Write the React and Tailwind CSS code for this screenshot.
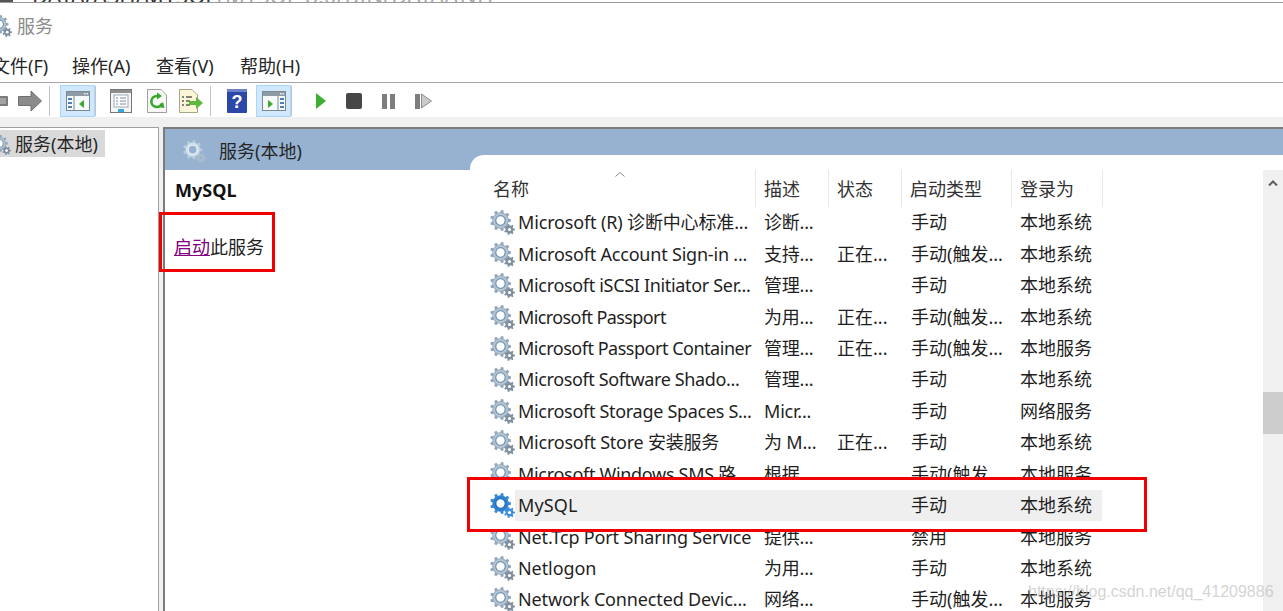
import React from "react";

const FONT = { fontFamily: '"Noto Sans", "Noto Sans CJK SC", sans-serif' };

function gearPoints(cx, cy, rOuter, rInner, teeth) {
  const pts = [];
  const step = (Math.PI * 2) / teeth;
  for (let i = 0; i < teeth; i++) {
    const a = i * step;
    const w = step * 0.22;
    pts.push([a - w * 1.3, rInner], [a - w * 0.8, rOuter], [a + w * 0.8, rOuter], [a + w * 1.3, rInner]);
  }
  return pts
    .map(([a, r]) => `${(cx + Math.cos(a) * r).toFixed(2)},${(cy + Math.sin(a) * r).toFixed(2)}`)
    .join(" ");
}

const BIG = gearPoints(10.5, 10.5, 10.5, 8.2, 9);
const SMALL = gearPoints(19.5, 19.5, 5.5, 4, 7);

function Gear({ palette = "grey", className = "" }) {
  const p = {
    grey: { a: "#8fa6bd", b: "#b9c4cf", c: "#7f8f9f", hole: "#ffffff", ring: "#6d95bd" },
    blue: { a: "#3d8bd6", b: "#2f7fd0", c: "#3f8fdc", hole: "#ffffff", ring: "#1f6fc0" },
    pale: { a: "#b7cde0", b: "#d2e0ec", c: "#a9bccd", hole: "#97b2d1", ring: "#e3eef6" },
  }[palette];
  return (
    <svg viewBox="0 0 25 25" className={className}>
      <polygon points={BIG} fill={p.a} />
      <circle cx="10.5" cy="10.5" r="7.4" fill={p.b} />
      <circle cx="10.5" cy="10.5" r="4.8" fill={p.hole} stroke={p.ring} strokeWidth="1.3" />
      <polygon points={SMALL} fill={p.c} />
      <circle cx="19.5" cy="19.5" r="1.6" fill={palette === "pale" ? "#97b2d1" : "#ffffff"} />
    </svg>
  );
}

function Sep() {
  return <div className="h-[30px] w-px bg-[#c4c4c4]" />;
}

function PaneIcon({ flip }) {
  return (
    <svg viewBox="0 0 24 20" className="h-[20px] w-[24px]">
      <rect x="0.5" y="0.5" width="23" height="19" fill="#f7f9fb" stroke="#7d8a94" />
      <rect x="1" y="1" width="22" height="4" fill="#8f9ba5" />
      <path d="M18 2h1.5v1.5H18zM20.5 2H22v1.5h-1.5z" fill="#e9eef2" />
      {flip ? (
        <>
          <path d="M16 5v14" stroke="#7d8a94" />
          <path d="M6 9l5 4-5 4z" fill="#38a82e" />
          <path d="M18 8h4M18 12h4M18 16h4" stroke="#4d80bd" strokeWidth="2" />
        </>
      ) : (
        <>
          <path d="M8 5v14" stroke="#7d8a94" />
          <path d="M18 9l-5 4 5 4z" fill="#38a82e" />
          <path d="M2 8h4M2 12h4M2 16h4" stroke="#4d80bd" strokeWidth="2" />
        </>
      )}
    </svg>
  );
}

function Toolbar() {
  return (
    <div className="flex h-[34px] items-center bg-white pt-[2px]">
      <svg viewBox="0 0 8 10" className="h-[10px] w-[8px]">
        <rect x="-4" y="0" width="12" height="10" rx="1" fill="#7b7b7b" />
        <rect x="-4" y="2" width="10" height="6" fill="#a3a3a3" />
      </svg>
      <svg viewBox="0 0 24 22" className="ml-[10px] h-[22px] w-[24px]">
        <path d="M0.5 6.5H13V1l10.5 10L13 21v-5.500H0.500z" fill="#8b8b8b" stroke="#6f6f6f" />
      </svg>
      <div className="ml-[7px]"><Sep /></div>
      <div className="ml-[10px] flex h-[32px] w-[35px] items-center justify-center border border-[#a9d6fa] bg-[#cfe8fd]">
        <PaneIcon />
      </div>
      <Sep />
      <svg viewBox="0 0 22 24" className="ml-[14px] h-[24px] w-[22px]">
        <rect x="0.500" y="0.500" width="21" height="23" fill="#f4f5f6" stroke="#777" />
        <rect x="1" y="1" width="20" height="3" fill="#8e8e8e" />
        <rect x="4" y="6" width="14" height="12" fill="#fff" stroke="#9aa7b3" />
        <path d="M6 9h2M10 9h6M6 12h2M10 12h6M6 15h2M10 15h6" stroke="#7c8b99" />
        <rect x="8" y="20" width="6" height="3" fill="#35a9e6" />
      </svg>
      <svg viewBox="0 0 20 24" className="ml-[15px] h-[24px] w-[20px]">
        <path d="M0.500 0.500H14L19.500 6V23.500H0.500z" fill="#f7f7f5" stroke="#a0a0a0" />
        <path d="M10 7a5.500 5.500 0 1 0 5 7.500" fill="none" stroke="#36a62c" strokeWidth="2.600" />
        <path d="M10 3.500v7L15 7zM11 18l5-5 1.500 6z" fill="#36a62c" />
      </svg>
      <svg viewBox="0 0 24 24" className="ml-[12px] h-[24px] w-[24px]">
        <path d="M0.500 0.500H13L18.500 6V23.500H0.500z" fill="#fbf6d8" stroke="#a8a48a" />
        <path d="M3 8h2M7 8h6M3 12h2M7 12h4M3 16h2M7 16h4" stroke="#5f5f4f" strokeWidth="1.300" />
        <path d="M10 12h7V8l7 6-7 6v-4h-7z" fill="#5db83b" />
      </svg>
      <div className="ml-[7px]"><Sep /></div>
      <svg viewBox="0 0 20 24" className="ml-[16px] h-[24px] w-[20px]">
        <rect width="20" height="24" rx="1" fill="#2b47a8" />
        <rect x="0" y="0" width="20" height="3" fill="#6d82c8" />
        <text x="10" y="19" textAnchor="middle" fontSize="18" fontWeight="700" fill="#fff" fontFamily="Liberation Sans">?</text>
      </svg>
      <div className="ml-[9px] flex h-[32px] w-[35px] items-center justify-center border border-[#a9d6fa] bg-[#cfe8fd]">
        <PaneIcon flip />
      </div>
      <Sep />
      <svg viewBox="0 0 10 16" className="ml-[24px] h-[16px] w-[10px]">
        <path d="M0 0l10 8-10 8z" fill="#3fae33" />
      </svg>
      <div className="ml-[20px] h-[16px] w-[16px] rounded-[2px] bg-[#474747]" />
      <div className="ml-[20px] flex gap-[3px]">
        <div className="h-[15px] w-[5px] bg-[#7d7d7d]" />
        <div className="h-[15px] w-[5px] bg-[#7d7d7d]" />
      </div>
      <div className="ml-[20px] flex items-center gap-[1px]">
        <div className="h-[15px] w-[5px] bg-[#7d7d7d]" />
        <svg viewBox="0 0 11 16" className="h-[16px] w-[11px]">
          <path d="M0.500 1l10 7-10 7z" fill="#c9c9c9" stroke="#8f8f8f" />
        </svg>
      </div>
    </div>
  );
}

const ROWS = [
  ["Microsoft (R) 诊断中心标准...", "诊断...", "", "手动", "本地系统", "tracking-[-0.15px]"],
  ["Microsoft Account Sign-in ...", "支持...", "正在...", "手动(触发...", "本地系统", "tracking-[-0.2px]"],
  ["Microsoft iSCSI Initiator Ser...", "管理...", "", "手动", "本地系统", "tracking-[-0.32px]"],
  ["Microsoft Passport", "为用...", "正在...", "手动(触发...", "本地系统", "tracking-[-0.6px]"],
  ["Microsoft Passport Container", "管理...", "正在...", "手动(触发...", "本地服务", "tracking-[-0.48px]"],
  ["Microsoft Software Shado...", "管理...", "", "手动", "本地系统", "tracking-[-0.38px]"],
  ["Microsoft Storage Spaces S...", "Micr...", "", "手动", "网络服务", "tracking-[-0.3px]"],
  ["Microsoft Store 安装服务", "为 M...", "正在...", "手动", "本地系统", "tracking-[-0.23px]"],
  ["Microsoft Windows SMS 路...", "根据...", "", "手动(触发...", "本地服务", "tracking-[-0.3px]"],
  ["MySQL", "", "", "手动", "本地系统", "tracking-[0.15px]"],
  ["Net.Tcp Port Sharing Service", "提供...", "", "禁用", "本地服务", "tracking-[-0.15px]"],
  ["Netlogon", "为用...", "", "手动", "本地系统", "tracking-[-0.08px]"],
  ["Network Connected Devic...", "网络...", "", "手动(触发...", "本地服务", "tracking-[-0.15px]"],
];

function Row({ r }) {
  const selected = r[0] === "MySQL";
  return (
    <div className="flex h-[31.45px] shrink-0 items-center text-[18px] leading-[31px] whitespace-nowrap text-[#1f1f1f]">
      <div className="flex h-full w-[45px] items-center pl-[20px]">
        <Gear palette={selected ? "blue" : "grey"} className="h-[25px] w-[25px] shrink-0" />
      </div>
      <div className={`flex h-full items-center ${selected ? "bg-[#efefef]" : ""}`}>
        <div className={`w-[241px] pl-[3px] ${r[5]}`}>{r[0]}</div>
        <div className="w-[73px] pl-[8px] tracking-[-0.2px]">{r[1]}</div>
        <div className="w-[73px] pl-[8px]">{r[2]}</div>
        <div className="w-[110px] pl-[9px]">{r[3]}</div>
        <div className="w-[90px] pl-[8px]">{r[4]}</div>
      </div>
    </div>
  );
}

function Head({ w, pl, children }) {
  return (
    <div className="flex h-[37px] items-center border-r border-[#e8e8e8] pt-[1px]" style={{ width: w, paddingLeft: pl }}>
      {children}
    </div>
  );
}

function ServiceList() {
  return (
    <div className="relative flex min-w-0 flex-1 flex-col rounded-tl-[14px] bg-white pt-[15px]">
      <div className="flex shrink-0 text-[18px] text-[#333333]">
        <Head w={286} pl={23}>名称</Head>
        <Head w={73} pl={8}>描述</Head>
        <Head w={73} pl={8}>状态</Head>
        <Head w={110} pl={8}>启动类型</Head>
        <Head w={91} pl={8}>登录为</Head>
      </div>
      <svg viewBox="0 0 10 5" className="absolute top-[17px] left-[145px] h-[5px] w-[10px]">
        <path d="M0.500 4.500L5 0.500l4.500 4" fill="none" stroke="#8f8f8f" />
      </svg>
      {ROWS.map((r) => (
        <Row key={r[0]} r={r} />
      ))}
    </div>
  );
}

function Scrollbar() {
  return (
    <div className="flex w-[20px] shrink-0 flex-col bg-[#f0f0f0]">
      <svg viewBox="0 0 10 6" className="mx-auto mt-[10px] h-[6px] w-[10px]">
        <path d="M1 5.500l4-4 4 4" fill="none" stroke="#606060" strokeWidth="2" />
      </svg>
      <div className="mt-[206px] h-[42px] bg-[#cdcdcd]" />
    </div>
  );
}

export default function App() {
  return (
    <div className="relative h-[611px] w-[1283px] overflow-hidden bg-white" style={FONT}>
      <div className="relative h-[3px] overflow-hidden border-b border-[#9a9a9a] bg-white">
        <div className="absolute top-0 left-0 h-[2px] w-[13px] bg-[#555]" />
        <div className="absolute top-[-18px] left-[32px] text-[22px] leading-[26px] whitespace-nowrap text-[#333] uppercase">
          DATA/ASH/MYSQL<span className="text-[#aaa]">/MYSQL-8.0/BIN/DATA/INIT</span>
        </div>
      </div>

      <div className="flex h-[47px] items-center pb-[1px] text-[18px] text-[#8b8b8b]">
        <Gear palette="grey" className="ml-[-10px] h-[22px] w-[22px] shrink-0" />
        <span className="ml-[5px]">服务</span>
      </div>

      <div className="flex h-[33px] items-center border-b border-[#a6a6a6] text-[18px] text-[#262626]">
        <span className="ml-[-8px] w-[80px]">文件(F)</span>
        <span className="w-[84px]">操作(A)</span>
        <span className="w-[84px]">查看(V)</span>
        <span>帮助(H)</span>
      </div>

      <Toolbar />

      <div className="flex h-[494px] flex-col bg-[#f0f0f0] pt-[10px]">
        <div className="flex min-h-0 flex-1">
          <div className="w-[159px] shrink-0 border-t border-r border-[#9f9f9f] bg-white pt-[2px]">
            <div className="flex h-[27px] w-[105px] items-center bg-[#d9d9d9] pt-[2px] text-[18px] text-[#262626]">
              <Gear palette="grey" className="ml-[-9px] h-[20px] w-[20px] shrink-0" />
              <span className="ml-[4px]">服务(本地)</span>
            </div>
          </div>
          <div className="ml-[4px] flex min-w-0 flex-1 flex-col border-t-2 border-l-2 border-[#7b7b7b] bg-white">
            <div className="flex h-[41px] shrink-0 items-center bg-[#97b2d1] pt-[3px] text-[18px] text-[#262626]">
              <Gear palette="pale" className="ml-[18px] h-[23px] w-[23px] shrink-0" />
              <span className="ml-[13px]">服务(本地)</span>
            </div>
            <div className="flex min-h-0 flex-1">
              <div className="w-[305px] shrink-0 pl-[9px] text-[18px]">
                <div className="mt-[6px] ml-[1px] leading-[28px] font-bold text-[#111]">MySQL</div>
                <div className="mt-[29px] leading-[28px] text-[#1f1f1f]">
                  <span className="text-[#800080] underline">启动</span>此服务
                </div>
              </div>
              <div className="mt-[-15px] flex min-w-0 flex-1 flex-col">
                <div className="flex min-h-0 flex-1">
                  <ServiceList />
                  <div className="flex flex-col bg-white pt-[15px]">
                    <div className="flex flex-1"><Scrollbar /></div>
                  </div>
                </div>
              </div>
            </div>
          </div>
        </div>
      </div>

      <div className="pointer-events-none absolute top-[212px] left-[159px] h-[60px] w-[116px] border-[3px] border-[#f00000]" />
      <div className="pointer-events-none absolute top-[477px] left-[467px] flex h-[55px] w-[680px] flex-col justify-between border-[3px] border-[#f00000]">
        <div className="h-[10px] bg-white" />
        <div className="h-[7px] bg-white" />
      </div>
      <div
        className="pointer-events-none absolute top-[580px] left-[1028px] text-[16px] leading-[24px] whitespace-nowrap text-[#b9b9b9] opacity-60"
        style={{ fontFamily: '"Liberation Sans", sans-serif' }}
      >
        https://blog.csdn.net/qq_41209886
      </div>
    </div>
  );
}
